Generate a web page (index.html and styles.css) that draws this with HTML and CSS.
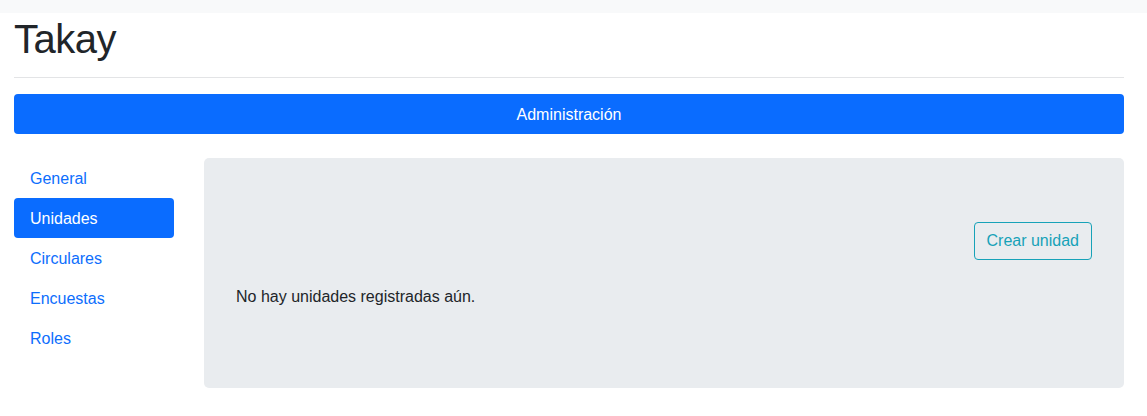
FILE: index.html
```html
<!DOCTYPE html>
<html lang="es">
<head>
<meta charset="utf-8">
<title>Takay</title>
<link rel="stylesheet" href="styles.css">
</head>
<body>
<div class="topbar"></div>
<main class="container">
  <h1 class="title">Takay</h1>
  <hr class="divider">
  <a class="admin-bar" href="#">Administración</a>
  <div class="layout">
    <nav class="side-nav">
      <a class="pill" href="#">General</a>
      <a class="pill active" href="#">Unidades</a>
      <a class="pill" href="#">Circulares</a>
      <a class="pill" href="#">Encuestas</a>
      <a class="pill" href="#">Roles</a>
    </nav>
    <section class="panel">
      <div class="actions">
        <button class="btn-outline-info" type="button">Crear unidad</button>
      </div>
      <p class="empty">No hay unidades registradas aún.</p>
    </section>
  </div>
</main>
</body>
</html>
```

FILE: styles.css
```css
html, body {
  margin: 0;
  padding: 0;
  background: #fff;
}
body {
  font-family: "Liberation Sans", Arial, Helvetica, sans-serif;
  font-size: 16px;
  line-height: 24px;
  color: #212529;
}
.topbar {
  height: 13px;
  background: #f8f9fa;
}
.container {
  margin: 0 23px 0 14px;
}
.title {
  margin: 2px 0 0;
  font-size: 40px;
  line-height: 48px;
  font-weight: 500;
  letter-spacing: -0.5px;
  color: #212529;
}
.divider {
  margin: 14px 0 16px;
  border: 0;
  border-top: 1px solid #e3e4e6;
  height: 0;
}
.admin-bar {
  display: block;
  height: 40px;
  line-height: 41px;
  text-align: center;
  background: #0a6cff;
  color: #fff;
  text-decoration: none;
  border-radius: 4px;
  font-weight: 400;
}
.layout {
  display: grid;
  grid-template-columns: 160px 1fr;
  column-gap: 30px;
  margin-top: 24px;
}
.side-nav {
  display: flex;
  flex-direction: column;
}
.pill {
  display: block;
  height: 40px;
  line-height: 41px;
  padding: 0 16px;
  color: #0d6efd;
  text-decoration: none;
  border-radius: 4px;
}
.pill.active {
  background: #0a6cff;
  color: #fff;
}
.panel {
  background: #e9ecef;
  border-radius: 5px;
  padding: 64px 32px;
  height: 230px;
  box-sizing: border-box;
}
.actions {
  display: flex;
  justify-content: flex-end;
}
.btn-outline-info {
  font-family: inherit;
  font-size: 16px;
  line-height: 24px;
  height: 38px;
  padding: 6px 12px;
  color: #17a2b8;
  background: transparent;
  border: 1px solid #17a2b8;
  border-radius: 4px;
  cursor: pointer;
}
.empty {
  margin: 25px 0 0;
  color: #212529;
}
```
